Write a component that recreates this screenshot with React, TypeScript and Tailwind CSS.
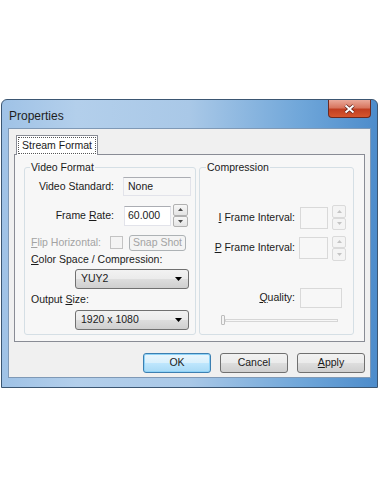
import React from "react";

const font = "font-['Liberation_Sans','Noto_Sans',sans-serif]";
const btnBg =
  "bg-[linear-gradient(#f2f2f2_0%,#ebebeb_48%,#dddddd_52%,#cfcfcf_100%)]";

const U = ({ c }: { c: string }) => <span className="underline underline-offset-1">{c}</span>;

const Arrow = ({ up, color }: { up?: boolean; color: string }) => (
  <svg width="5" height="3" viewBox="0 0 5 3">
    <path d={up ? "M0 3 L2.5 0 L5 3 Z" : "M0 0 L2.5 3 L5 0 Z"} fill={color} />
  </svg>
);

const Spinner = ({ w, h, disabled }: { w: string; h: string; disabled?: boolean }) => {
  const border = disabled ? "border-[#dadada]" : "border-[#b1b1b1]";
  const arrow = disabled ? "#c4c4c4" : "#4a4a4a";
  const half = `flex-1 flex items-center justify-center border rounded-[2px] ${border} ${
    disabled ? "bg-[#f4f4f4]" : "bg-[linear-gradient(#f7f7f7,#e4e4e4)]"
  }`;
  return (
    <div className={`flex flex-col ${w} ${h}`}>
      <div className={half}>
        <Arrow up color={arrow} />
      </div>
      <div className={half}>
        <Arrow color={arrow} />
      </div>
    </div>
  );
};

const Combo = ({ value }: { value: string }) => (
  <div
    className={`ml-[50px] w-[114px] h-[20px] flex items-center justify-between pl-[5px] pr-[6px] border border-[#707070] rounded-[3px] ${btnBg}`}
  >
    <span>{value}</span>
    <svg width="7" height="4" viewBox="0 0 7 4">
      <path d="M0 0 L7 0 L3.5 4 Z" fill="#000" />
    </svg>
  </div>
);

const Button = ({ children, def }: { children: React.ReactNode; def?: boolean }) => (
  <div
    className={`w-[68px] h-[20px] flex items-center justify-center rounded-[3px] border ${
      def
        ? "border-[#3c7fb1] bg-[linear-gradient(#eaf6fd_0%,#d9f0fc_48%,#bee6fd_52%,#a7d9f5_100%)] shadow-[inset_0_0_0_1px_#8fd3f7]"
        : `border-[#707070] ${btnBg}`
    }`}
  >
    {children}
  </div>
);

export default function App() {
  return (
    <div className={`w-[381px] h-[492px] bg-white pt-[99px] pl-[1px] text-[10.5px] text-[#1a1a1a] ${font}`}>
      {/* window frame */}
      <div className="w-[377px] h-[289px] rounded-t-[6px] border border-[#3b5672] bg-[linear-gradient(90deg,#9fc2e6_0%,#b3cfeb_20%,#a9c8e7_50%,#6fa6d9_80%,#4d8ccb_100%)] flex flex-col">
        {/* title bar */}
        <div className="h-[28px] flex justify-between pl-[7px] pr-[6px]">
          <div className="pt-[7px] text-[12px] text-[#1e1e1e]">Properties</div>
          <div className="w-[43px] h-[18px] rounded-b-[4px] border border-t-0 border-[#6b2a22] bg-[linear-gradient(#eaa99a_0%,#d8765f_45%,#c13f22_55%,#d6562e_100%)] flex items-center justify-center">
            <svg width="11" height="10" viewBox="0 0 11 10">
              <path d="M1.5 1.5 L9.5 8.5 M9.5 1.5 L1.5 8.5" stroke="#5a1d16" strokeWidth="3.4" />
              <path d="M1.5 1.5 L9.5 8.5 M9.5 1.5 L1.5 8.5" stroke="#fff" strokeWidth="2" />
            </svg>
          </div>
        </div>
        {/* client area */}
        <div className="mx-[6px] h-[250px] border border-[#7f99b6] bg-[#f0f0f0] flex flex-col">
          <div className="pl-[7px] pt-[6px] flex">
            <div className="h-[20px] px-[1px] pt-[1px] border border-b-0 border-[#898c95] bg-white relative z-10 -mb-[1px]">
              <div className="h-[17px] px-[3px] flex items-center border border-dotted border-[#555]">
                Stream Format
              </div>
            </div>
          </div>
          {/* tab panel */}
          <div className="ml-[5px] w-[351px] h-[188px] border border-[#898c95] bg-[#f7f7f7] flex gap-[3px] pl-[9px] pt-[5px]">
            {/* video format */}
            <fieldset className="w-[172px] h-[175px] border border-[#d5dfe5] rounded-[3px] px-0">
              <legend className="ml-[5px] px-[1px] leading-[14px]">Video Format</legend>
              <div className="flex items-center mt-[3px] h-[19px]">
                <div className="w-[89px] text-right">Video Standard:</div>
                <div className="ml-[9px] w-[68px] h-[19px] pl-[4px] flex items-center border border-[#e2e3ea] border-t-[#abadb3]">
                  None
                </div>
              </div>
              <div className="flex items-center mt-[8px] h-[23px]">
                <div className="w-[89px] text-right">
                  Frame <U c="R" />ate:
                </div>
                <div className="ml-[10px] w-[47px] h-[20px] pl-[3px] flex items-center bg-white border border-[#e2e3ea] border-t-[#abadb3]">
                  60.000
                </div>
                <div className="ml-[2px]">
                  <Spinner w="w-[15px]" h="h-[23px]" />
                </div>
              </div>
              <div className="flex items-center mt-[8px] h-[15px] text-[#a3a3a3]">
                <div className="w-[85px] pl-[6px]">
                  <U c="F" />lip Horizontal:
                </div>
                <div className="w-[13px] h-[13px] border border-[#c3c3c3] bg-[#f4f4f4]"></div>
                <div className="ml-[6px] w-[57px] h-[16px] flex items-center justify-center border border-[#adb2b5] rounded-[3px] bg-[#f4f4f4]">
                  Snap Shot
                </div>
              </div>
              <div className="mt-[2px] h-[14px] pl-[6px] leading-[14px]">
                <U c="C" />olor Space / Compression:
              </div>
              <div className="mt-[3px]">
                <Combo value="YUY2" />
              </div>
              <div className="mt-[3px] h-[14px] pl-[6px] leading-[14px]">
                Output <U c="S" />ize:
              </div>
              <div className="mt-[4px]">
                <Combo value="1920 x 1080" />
              </div>
            </fieldset>
            {/* compression */}
            <fieldset className="w-[155px] h-[175px] border border-[#d5dfe5] rounded-[3px] px-0">
              <legend className="ml-[6px] px-[1px] leading-[14px]">Compression</legend>
              <div className="flex items-center mt-[31px] h-[25px]">
                <div className="w-[95px] text-right">
                  <U c="I" /> Frame Interval:
                </div>
                <div className="ml-[5px] w-[28px] h-[22px] border border-[#d9d9d9]"></div>
                <div className="ml-[4px]">
                  <Spinner w="w-[14px]" h="h-[25px]" disabled />
                </div>
              </div>
              <div className="flex items-center mt-[5px] h-[26px]">
                <div className="w-[95px] text-right">
                  <U c="P" /> Frame Interval:
                </div>
                <div className="ml-[4px] w-[29px] h-[22px] border border-[#d9d9d9]"></div>
                <div className="ml-[4px]">
                  <Spinner w="w-[14px]" h="h-[25px]" disabled />
                </div>
              </div>
              <div className="flex items-center mt-[27px] h-[20px]">
                <div className="w-[95px] text-right">
                  <U c="Q" />uality:
                </div>
                <div className="ml-[5px] w-[42px] h-[20px] border border-[#d9d9d9]"></div>
              </div>
              <div className="mt-[7px] ml-[21px] w-[117px] h-[10px] flex items-center">
                <div className="w-[4px] h-[10px] border border-[#bdbdbd] rounded-[1px] bg-[#f4f4f4]"></div>
                <div className="flex-1 h-[3px] border border-[#d6d6d6] bg-[#f7f7f7]"></div>
              </div>
            </fieldset>
          </div>
          {/* buttons */}
          <div className="mt-[11px] flex justify-end gap-[9px] pr-[5px]">
            <Button def>OK</Button>
            <Button>Cancel</Button>
            <Button>
              <span>
                <U c="A" />pply
              </span>
            </Button>
          </div>
        </div>
      </div>
    </div>
  );
}
